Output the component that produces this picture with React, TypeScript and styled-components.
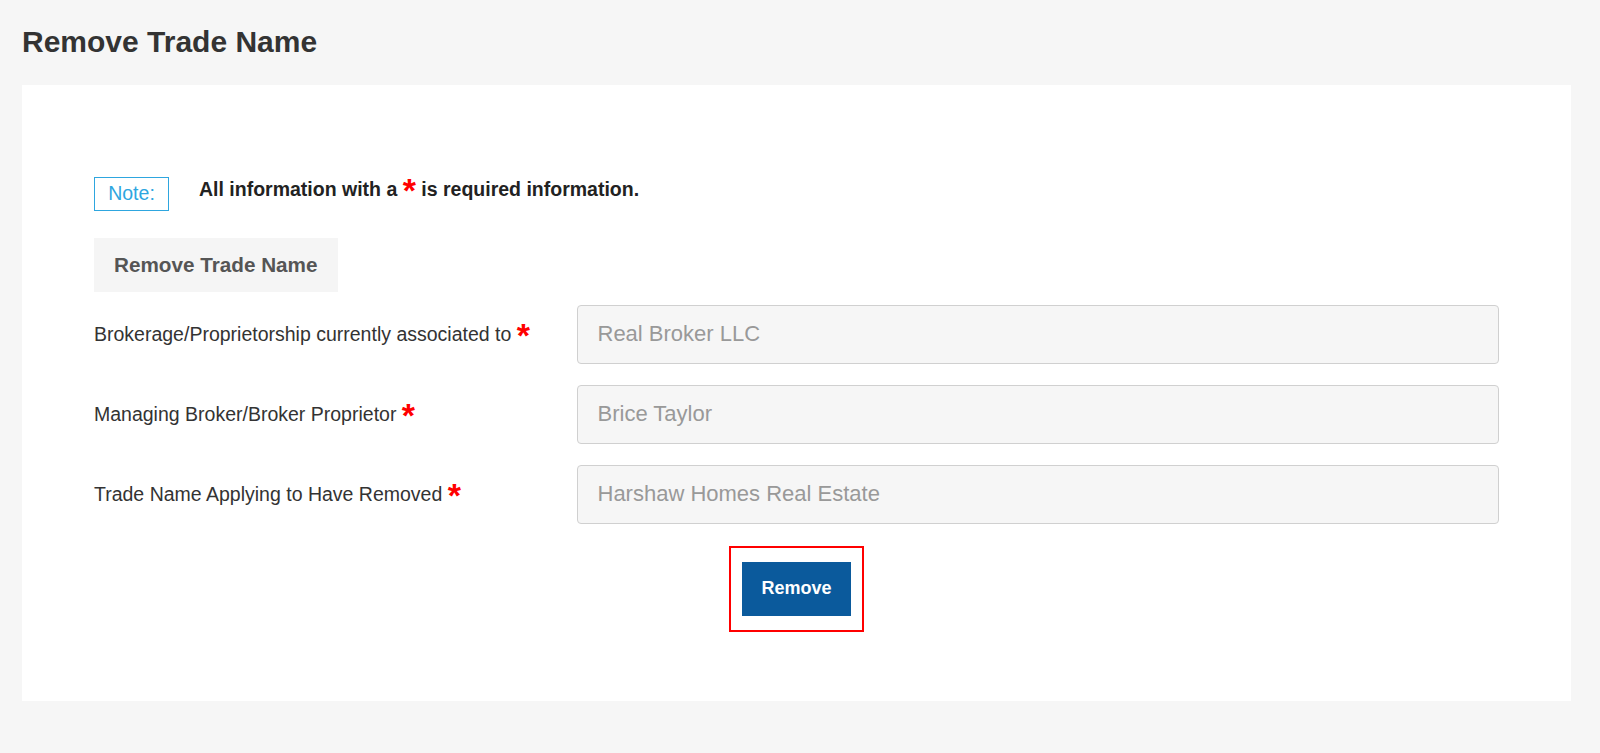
import styled, { createGlobalStyle } from 'styled-components';

const GlobalStyle = createGlobalStyle`
  body {
    margin: 0;
    background: #f6f6f6;
    font-family: 'Liberation Sans', Arial, sans-serif;
    color: #333;
  }
`;

const fields = [
  { label: 'Brokerage/Proprietorship currently associated to', value: 'Real Broker LLC' },
  { label: 'Managing Broker/Broker Proprietor', value: 'Brice Taylor' },
  { label: 'Trade Name Applying to Have Removed', value: 'Harshaw Homes Real Estate' },
];

const App = () => {
  return (
    <Page>
      <GlobalStyle />
      <Title>Remove Trade Name</Title>
      <Card>
        <NoteRow>
          <NoteBox>Note:</NoteBox>
          <NoteText>
            All information with a <Required>*</Required> is required information.
          </NoteText>
        </NoteRow>
        <SectionHeader>Remove Trade Name</SectionHeader>
        <FormGrid>
          {fields.map((field) => (
            <FieldRow key={field.label}>
              <Label>
                {field.label} <Required>*</Required>
              </Label>
              <Input readOnly value={field.value} />
            </FieldRow>
          ))}
        </FormGrid>
        {/* highlight frame around the action */}
        <Highlight>
          <RemoveButton type="button">Remove</RemoveButton>
        </Highlight>
      </Card>
    </Page>
  );
};

export default App;

// Styled Components

const Page = styled.div`
  padding: 27px 29px 52px 22px;
`;

const Title = styled.h1`
  margin: 0 0 28px;
  font-size: 30px;
  line-height: 29.5px;
  font-weight: 700;
  color: #333;
`;

const Card = styled.div`
  background: #fff;
  padding: 92px 72px 69px 72px;
`;

const NoteRow = styled.div`
  display: flex;
  align-items: center;
`;

const NoteBox = styled.div`
  box-sizing: border-box;
  width: 75px;
  height: 34px;
  border: 1px solid #2ea6df;
  color: #2ea6df;
  font-size: 19.5px;
  display: flex;
  align-items: center;
  justify-content: center;
`;

const NoteText = styled.div`
  margin-left: 30px;
  margin-bottom: 8px;
  font-size: 19.5px;
  font-weight: 700;
  color: #222;
`;

const SectionHeader = styled.div`
  display: inline-block;
  margin-top: 27px;
  height: 54px;
  line-height: 54px;
  padding: 0 20px;
  background: #f5f5f5;
  font-size: 20.7px;
  font-weight: 700;
  color: #555;
`;

const FormGrid = styled.div`
  margin-top: 13px;
  display: flex;
  flex-direction: column;
  gap: 21px;
`;

const FieldRow = styled.div`
  display: grid;
  grid-template-columns: 482.5px 1fr;
  align-items: center;
`;

const Label = styled.label`
  font-size: 19.5px;
  color: #333;
`;

const Required = styled.span`
  color: #f00;
  font-weight: 700;
  font-size: 34px;
  line-height: 0;
  vertical-align: -6px;
`;

const Input = styled.input`
  box-sizing: border-box;
  width: 100%;
  height: 59px;
  padding: 0 20px;
  border: 1px solid #d0d0d0;
  border-radius: 4px;
  background: #f6f6f6;
  font-family: 'Liberation Sans', Arial, sans-serif;
  font-size: 22px;
  color: #999;
  outline: none;
`;

const Highlight = styled.div`
  width: fit-content;
  margin: 22px auto 0;
  padding: 14px 11px;
  border: 2px solid #f00;
`;

const RemoveButton = styled.button`
  display: block;
  width: 109px;
  height: 54px;
  border: none;
  background: #0b5a9c;
  color: #fff;
  font-family: 'Liberation Sans', Arial, sans-serif;
  font-size: 18px;
  font-weight: 700;
  cursor: pointer;
`;
